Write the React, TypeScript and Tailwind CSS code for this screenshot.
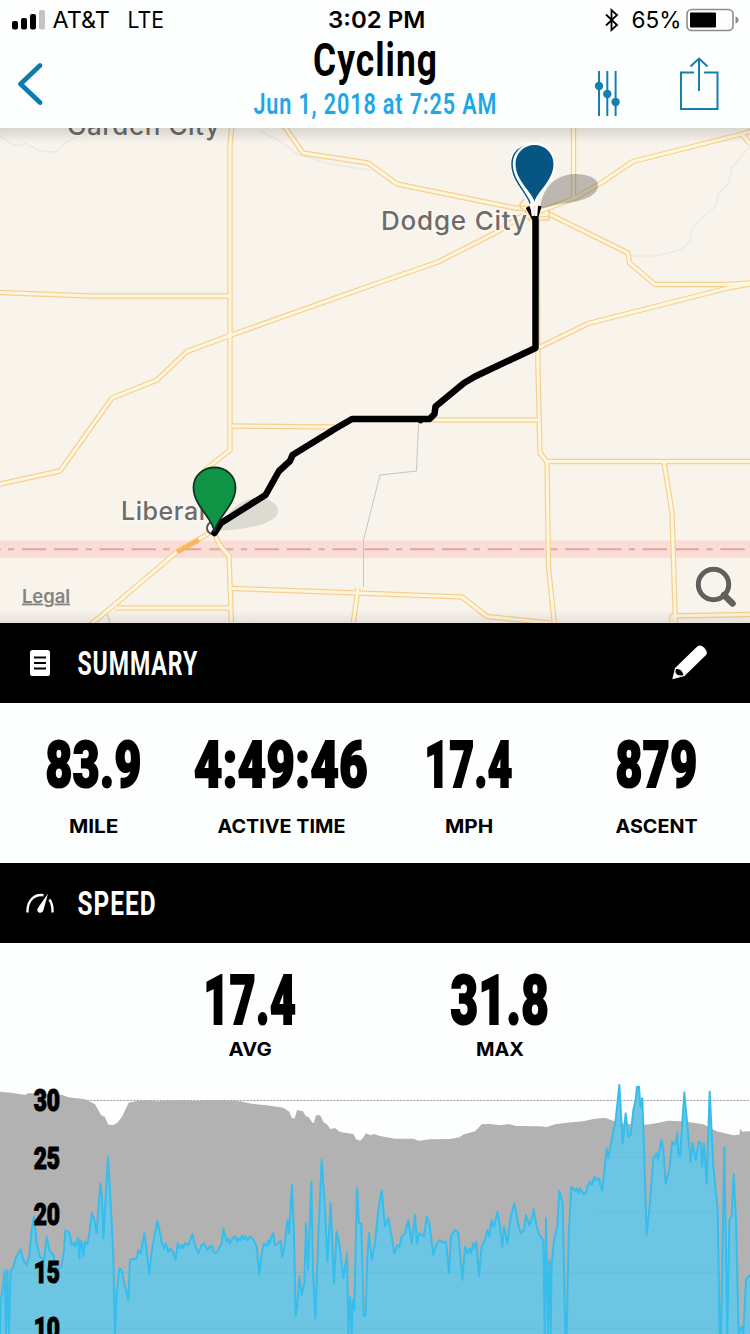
import { useLayoutEffect, useRef, useState } from "react";

const roads = [
  "M0 292.5 L90 296 L230 296",
  "M232 426 L335 427",
  "M430 420 L540 420",
  "M547 461.5 L750 461.5",
  "M664 462 L672 513 L675.5 625",
  "M672 625 L672 616 L750 614.5",
  "M232 588.5 L357 593 L462 597 L487 616.5 L550 623",
  "M358 588 L353 625",
  "M115 608 L230 608",
  "M213 530 L219 544 L229 556 L231.5 625",
  "M213 531 L178 551 L113 606 L90 625",
  "M232.5 120 L230 145 L230 450 L205 470",
  "M0 484 L60 471 L112 398 L157 380 L187 351.5 L230 335.5 L375 284 L438 262 L497 232 L520 217 L549 214",
  "M280 120 L303 153 L368 163 L397 184 L515 208 L545 209",
  "M573.5 120 L573.5 198",
  "M540 211 L573 199 L601 183 L633 161.5 L742 134 L755 130",
  "M742 134 L750 144",
  "M545 212 L628 253 L629.5 263 L655 284.5 L728 284.5 L755 282.5",
  "M536 349 L588 323.5 L728 288 L755 283",
  "M537 215 L538 370 L540 453 L547 462 L548.5 567 L554.5 625",
];

const speedLine =
  "0,792 2,690 8,660 14,600 18,792 22,600 27,792 32,600 40,592 48,562 55,550 62,538 70,570 80,585 88,560 95,480 102,440 110,520 120,560 132,570 140,500 150,545 160,555 170,600 185,590 192,540 196,480 208,488 215,525 221,518 226,530 231,510 235,505 238,565 242,512 246,520 250,560 255,515 262,522 268,490 276,428 283,450 290,490 301,340 306,380 310,505 324,262 332,400 340,560 345,792 350,670 358,595 366,602 372,640 378,660 385,690 390,570 410,565 415,540 422,550 433,490 440,540 448,615 455,545 463,500 472,453 480,490 487,525 492,535 497,520 505,545 512,535 518,545 527,568 533,520 539,535 545,525 549,535 555,520 565,525 571,510 577,492 585,525 595,550 605,525 612,520 622,540 629,530 635,528 641,545 647,550 655,540 665,520 670,478 680,515 685,505 690,520 698,505 705,498 711,515 715,505 721,512 725,497 731,508 736,498 742,510 750,500 760,508 770,530 778,615 785,550 792,520 800,528 805,510 809,522 815,498 820,490 824,525 832,522 842,512 847,560 855,520 862,450 867,490 876,345 882,500 887,738 892,700 898,620 905,675 913,640 918,460 924,600 934,335 939,600 946,745 955,500 965,270 975,420 982,575 992,400 1002,640 1010,485 1018,520 1030,625 1041,550 1045,792 1050,680 1055,792 1058,690 1063,720 1071,355 1077,460 1084,460 1091,738 1097,735 1102,560 1107,490 1115,570 1125,520 1135,420 1145,362 1155,470 1165,445 1175,500 1183,550 1192,525 1198,530 1205,500 1215,490 1225,450 1235,520 1245,435 1251,520 1258,490 1272,500 1280,440 1288,460 1300,555 1310,520 1320,510 1328,518 1338,515 1347,610 1353,500 1360,485 1367,480 1375,490 1387,630 1395,530 1402,552 1408,535 1413,550 1420,520 1424,535 1429,515 1437,618 1445,530 1455,510 1462,480 1468,500 1475,450 1482,470 1492,425 1500,470 1507,530 1512,470 1522,520 1532,440 1543,400 1552,450 1562,490 1572,480 1578,435 1588,465 1595,450 1601,418 1610,470 1618,495 1630,510 1634,792 1638,445 1644,792 1648,570 1652,792 1655,580 1662,510 1672,470 1678,362 1688,400 1696,792 1700,792 1706,500 1714,350 1725,362 1731,355 1735,370 1740,355 1750,372 1758,368 1762,350 1770,335 1776,345 1783,320 1790,330 1797,325 1802,345 1807,362 1820,235 1825,265 1835,210 1847,150 1858,45 1868,220 1877,130 1885,200 1892,195 1900,120 1907,90 1911,50 1917,50 1921,110 1927,85 1934,300 1940,495 1948,420 1960,265 1970,250 1974,270 1984,210 1990,240 1997,340 2008,300 2017,215 2025,225 2032,190 2035,250 2040,260 2053,67 2065,200 2072,275 2078,220 2087,270 2096,215 2103,220 2106,290 2112,220 2120,340 2129,65 2140,290 2153,420 2159,792 2163,792 2173,232 2182,792 2188,450 2195,440 2201,312 2208,450 2216,792 2225,770 2230,792 2238,630 2250,615";

const elevation =
  "0,65 40,69 75,75 85,70 110,70 185,74 205,82 255,88 285,103 303,135 314,140 325,164 340,165 352,158 365,142 386,98 412,93 440,91 470,94 500,92 540,91 590,93 640,90 720,94 755,101 800,106 850,113 868,125 876,145 884,145 891,120 909,124 917,138 926,142 938,158 942,158 947,138 956,134 962,138 970,155 982,165 992,177 1005,174 1020,186 1060,192 1068,208 1080,212 1088,205 1098,190 1112,196 1122,192 1140,198 1160,202 1185,206 1240,206 1255,212 1290,208 1350,207 1378,202 1392,193 1425,184 1437,172 1445,163 1470,162 1500,166 1525,162 1550,168 1620,169 1640,171 1665,163 1700,158 1750,154 1780,147 1815,143 1860,160 1930,165 1960,161 2005,152 2050,154 2110,163 2150,184 2200,196 2218,194 2221,176 2227,185 2250,184";

const axis = [
  { value: 30, y: 123 },
  { value: 25, y: 297 },
  { value: 20, y: 465 },
  { value: 15, y: 639 },
  { value: 10, y: 807 },
];

// Squeezes a line of text to the given width, for a condensed look
const Fit = ({
  text,
  width,
  className = "",
}: {
  text: string;
  width: number;
  className?: string;
}) => {
  const ref = useRef<HTMLSpanElement>(null);
  const [scale, setScale] = useState(1);
  useLayoutEffect(() => {
    if (ref.current) setScale(width / ref.current.offsetWidth);
  }, [width, text]);
  return (
    <span className="flex justify-center" style={{ width }}>
      <span
        ref={ref}
        className={`shrink-0 whitespace-nowrap ${className}`}
        style={{ transform: `scaleX(${scale})` }}>
        {text}
      </span>
    </span>
  );
};

const StatusBar = () => (
  <div className="flex justify-between h-10 pl-3 pr-[10px] text-[23px] leading-[41px] font-['Inter',sans-serif]">
    <div className="flex items-center w-[230px]">
      <svg width="34" height="20" className="mr-[7px]">
        <rect x="0" y="11" width="6" height="8.5" rx="2" />
        <rect x="9" y="8" width="6" height="11.5" rx="2" />
        <rect x="18" y="4" width="6" height="15.5" rx="2" />
        <rect x="27" y="0" width="6" height="19.5" rx="2" fill="#c4c4c4" />
      </svg>
      <Fit text="AT&T" width={57} />
      <span className="w-[18px]" />
      <Fit text="LTE" width={36} />
    </div>
    <span className="ml-[2px]">
      <Fit text="3:02 PM" width={97} className="font-semibold" />
    </span>
    <div className="flex items-center justify-end w-[230px]">
      <svg width="16" height="24" viewBox="0 0 16 24" fill="none" stroke="#000" strokeWidth="1.8" className="mr-[11px]">
        <path d="M2 6.5 L13 17 L7.5 22 V2 L13 7 L2 17.5" />
      </svg>
      <Fit text="65%" width={50} />
      <svg width="54" height="24" viewBox="0 0 54 24" className="ml-[5px]">
        <rect x="1" y="1.5" width="46" height="21" rx="4.5" fill="none" stroke="#8c8c8c" strokeWidth="1.6" />
        <rect x="4" y="4.500" width="26" height="15" rx="1" />
        <path d="M49.5 8.5 Q52.5 9.5 52.5 12 Q52.5 14.5 49.5 15.500 Z" fill="#8c8c8c" />
      </svg>
    </div>
  </div>
);

const Header = () => (
  <header className="h-32 bg-[#fdfefe]">
    <StatusBar />
    <div className="flex justify-between h-[88px] pl-4 pr-[30px]">
      <svg width="150" height="88" viewBox="16 40 150 88" fill="none" stroke="#0b7bb0" strokeWidth="4.8" strokeLinecap="round" strokeLinejoin="round">
        <path d="M40 65.5 L20.5 84 L40 102.5" />
      </svg>
      <div className="flex flex-col items-center ml-[14px] font-['Roboto',sans-serif]">
        <Fit text="Cycling" width={125} className="text-[46px] font-bold tracking-[0.03em] leading-[40px]" />
        <Fit text="Jun 1, 2018 at 7:25 AM" width={244} className="text-[30px] font-semibold tracking-[0.04em] leading-[40px] mt-[4px] text-[#1ea7e6]" />
      </div>
      <svg width="150" height="88" viewBox="570 40 150 88" fill="none" stroke="#157fae" strokeWidth="2">
        <path d="M599 71 V116 M607.3 71 V116 M615.6 71 V116" />
        <g fill="#157fae" stroke="none">
          <circle cx="599" cy="86" r="4.2" />
          <circle cx="607.3" cy="94" r="4.2" />
          <circle cx="615.6" cy="102" r="4.2" />
        </g>
        <path d="M694 72.5 H681 V109 H717.5 V72.5 H704 M699 91 V59 M690.5 66.5 L699 58.5 L707.5 66.5" />
      </svg>
    </div>
  </header>
);

const RouteMap = () => (
  <svg width="750" height="495" viewBox="0 128 750 495" className="block bg-[#f8f4ec]">
    <defs>
      <linearGradient id="top" x1="0" y1="0" x2="0" y2="1">
        <stop offset="0" stopColor="#000" stopOpacity=".13" />
        <stop offset="1" stopColor="#000" stopOpacity="0" />
      </linearGradient>
      <linearGradient id="bottom" x1="0" y1="0" x2="0" y2="1">
        <stop offset="0" stopColor="#000" stopOpacity="0" />
        <stop offset="1" stopColor="#000" stopOpacity=".08" />
      </linearGradient>
    </defs>

    {/* rivers */}
    <g fill="none" stroke="#ece9e3" strokeWidth="1.5">
      <path d="M0 136 L10 143 L20 146 L25 143 L40 151 L55 152 L65 143 L80 135" />
      <path d="M260 131 L280 141 L297 154 L330 164 L370 170" />
      <path d="M630 256 L655 256 L680 250 L690 241 L692 229 L706 214 L716 206 L718 194 L728 184 L732 168 L741 157 L750 146" />
    </g>

    {/* state line */}
    <rect x="0" y="540.5" width="750" height="17.5" fill="#fbddd5" />
    <path d="M-55.6 549.2 H750" stroke="#d6aaa4" strokeWidth="2" strokeDasharray="24.3 7.7 24.3 7.3 6.3 7.7" />

    <path d="M418.5 424 L416.5 471 L380 475 L363.5 540 L363.5 587 M107 613 L110 623" fill="none" stroke="#c6c4bf" />

    <g fill="none" stroke="#f5d092" strokeWidth="5.4" strokeLinejoin="round">
      {roads.map((d) => (
        <path key={d} d={d} />
      ))}
    </g>
    <g fill="none" stroke="#fff6dd" strokeWidth="3" strokeLinejoin="round">
      {roads.map((d) => (
        <path key={d} d={d} />
      ))}
    </g>
    <path d="M199 540 L177 552" stroke="#fbb65b" strokeWidth="4.5" />
    <path d="M528 220 H549 V210 M519 206 L524 199 M519 206 L528 214" fill="none" stroke="#f4cf8f" strokeWidth="1.5" />

    <circle cx="213" cy="528" r="6" fill="#fff" stroke="#555" strokeWidth="2" />

    <g fill="#6e6c6b" stroke="#fbf8f2" strokeWidth="3" paintOrder="stroke" className="font-['Inter',sans-serif] font-medium">
      <text x="67" y="134.5" fontSize="26" textLength="153">Garden City</text>
      <text x="381" y="229.5" fontSize="26" textLength="146">Dodge City</text>
      <text x="121" y="520" fontSize="25" textLength="84">Liberal</text>
    </g>

    {/* pin shadows */}
    <path d="M540 209 C542 188 555 175 574 174 C590 174 599 179 598 187 C596 198 577 202 560 204 Z" fill="#5a5852" fillOpacity=".38" />
    <path d="M218 531 C228 511 240 499 256 498 C270 498 279 504 278 512 C276 522 258 526 240 529 Z" fill="#5a5852" fillOpacity=".17" />

    <path
      d="M535.5 220 V348 L510 360 L475 376.5 L464 383 L435.5 406.5 L434.5 414 L429.5 419 H352 L333 430 L330 432 L292.5 455 L290 461 L279 471 L265.5 495 L240 511 L221 523 L214.5 533"
      fill="none"
      stroke="#000"
      strokeWidth="6.5"
      strokeLinecap="round"
      strokeLinejoin="round"
    />
    <path d="M527.5 207 L534 219 M539.5 206 L536 219" stroke="#000" strokeWidth="4" />
    <circle cx="420.5" cy="421" r="2.5" />

    <path d="M214.5 532 C213 518 193.5 506 193.5 487.5 C193.5 476 203 467.5 214.5 467.5 C226 467.5 235.5 476 235.5 487.5 C235.5 506 216 518 214.5 532 Z" fill="#0f9446" stroke="#12351f" strokeWidth="1.8" />

    <g strokeLinejoin="round">
      <path d="M532 205 C530 194 512.5 182 512.5 164 C512.5 153 521 145 532 145 C543 145 551.5 153 551.5 164 C551.5 182 534 194 532 205 Z" fill="#075582" stroke="#fff" strokeWidth="5" />
      <path d="M531 206 C529 194 512 182 512 164 C512 153 520 145 532 145" fill="none" stroke="#075582" strokeWidth="1.5" />
      <path d="M534.5 202 C532.5 192 515.5 181 515.5 164 C515.5 153 524 145 534.5 145 C545 145 553.5 153 553.5 164 C553.5 181 536.5 192 534.5 202 Z" fill="#075582" stroke="#fff" strokeWidth="4.5" paintOrder="stroke" />
      <path d="M531 203 L533 216 M537 203 L536 216" stroke="#fff" strokeWidth="2.5" />
    </g>

    <text x="22" y="602.5" fontSize="18.5" textLength="48" fill="#858381" className="font-['Inter',sans-serif] font-semibold underline decoration-2">Legal</text>

    <circle cx="713.5" cy="584.5" r="15.2" fill="none" stroke="#fff" strokeOpacity=".6" strokeWidth="7" />
    <path d="M724 595 L732.5 603.5" stroke="#62605d" strokeWidth="6.5" strokeLinecap="round" />
    <circle cx="713.5" cy="584.5" r="15.2" fill="none" stroke="#62605d" strokeWidth="5" />

    <rect x="0" y="128" width="750" height="15" fill="url(#top)" />
    <rect x="0" y="610" width="750" height="13" fill="url(#bottom)" />
  </svg>
);

const NotesIcon = () => (
  <svg width="28" height="28" viewBox="26 648 28 28">
    <rect x="30" y="649" width="20" height="26" rx="2.5" fill="#fff" />
    <path d="M34 656.5 H46 M34 662 H46 M34 667.5 H46" stroke="#000" strokeWidth="2.2" />
  </svg>
);

const GaugeIcon = () => (
  <svg width="28" height="22" viewBox="0 0 28 22">
    <path d="M1.5 20.5 C1 9 8 1.8 17.5 3.2 M23.5 7.5 C25.8 11 26.8 15 26.5 20.5" fill="none" stroke="#fff" strokeWidth="2.4" />
    <path d="M22 1.5 L17.6 17.5 C16.8 20.8 14.5 21.3 12.5 20.2 C10.8 19 11 17 12.6 15 Z" fill="#fff" />
  </svg>
);

const PencilIcon = () => (
  <svg width="36" height="36" viewBox="672 645 36 36">
    <path d="M672.3 679.3 L675 668 L697.5 646.3 Q700.3 644 704 647.5 Q708.5 652 706 655 L684.5 676 Z" fill="#fff" />
    <path d="M676 669 Q681.5 668 683.5 675 Q677.5 677 675.3 672 Z" fill="#000" />
  </svg>
);

const Stat = ({
  value,
  label,
  valueWidth,
  labelWidth,
  big,
}: {
  value: string;
  label: string;
  valueWidth: number;
  labelWidth: number;
  big?: boolean;
}) => (
  <div className="flex flex-col items-center">
    <Fit
      text={value}
      width={valueWidth}
      className={`font-['Roboto',sans-serif] font-black leading-[68px] tracking-[0.01em] [-webkit-text-stroke:2.2px_#000] ${big ? "text-[69px]" : "text-[65px]"}`}
    />
    <Fit
      text={label}
      width={labelWidth}
      className={`font-['Inter',sans-serif] font-bold text-[19px] leading-6 ${big ? "mt-[3px]" : "mt-4"}`}
    />
  </div>
);

const SpeedChart = () => (
  <svg width="750" height="264" viewBox="0 0 2250 792" className="block">
    <path d="M0 91.5 H2250" stroke="#a5a5a5" strokeWidth="3" strokeDasharray="7 3" />
    <polygon points={`0,792 ${elevation} 2250,792`} fill="#b2b2b2" />
    <polygon points={`0,792 ${speedLine} 2250,792`} fill="#6cc6e3" />
    <path d="M1830 262 H2060 M1790 427 H2150 M0 607 H2160 M0 775 H2250" stroke="#63c0de" strokeWidth="3" fill="none" />
    <polyline points={speedLine} fill="none" stroke="#37bdec" strokeWidth="6" strokeLinejoin="round" />
    <g className="font-['Roboto',sans-serif] font-black" fontSize="92" stroke="#000" strokeWidth="3.5">
      {axis.map(({ value, y }) => (
        <text key={value} x="101" y={y} textLength="79" lengthAdjust="spacingAndGlyphs">
          {value}
        </text>
      ))}
    </g>
  </svg>
);

const App = () => {
  return (
    <main className="w-[750px] h-[1334px] overflow-hidden text-black bg-[#fdfefe]">
      <Header />
      <RouteMap />

      <h2 className="flex items-center h-20 pl-[26px] pr-[42px] text-white bg-black">
        <NotesIcon />
        <span className="ml-[23px]">
          <Fit text="SUMMARY" width={121} className="font-['Roboto',sans-serif] font-bold text-[34px] tracking-[0.04em]" />
        </span>
        <span className="ml-auto">
          <PencilIcon />
        </span>
      </h2>
      <div className="grid grid-cols-4 h-40 pt-[28px]">
        <Stat value="83.9" label="MILE" valueWidth={96} labelWidth={49} />
        <Stat value="4:49:46" label="ACTIVE TIME" valueWidth={174} labelWidth={128} />
        <Stat value="17.4" label="MPH" valueWidth={88} labelWidth={48} />
        <Stat value="879" label="ASCENT" valueWidth={82} labelWidth={82} />
      </div>

      <h2 className="flex items-center h-20 pl-[26px] text-white bg-black">
        <GaugeIcon />
        <span className="ml-[23px]">
          <Fit text="SPEED" width={79} className="font-['Roboto',sans-serif] font-bold text-[34px] tracking-[0.04em]" />
        </span>
      </h2>
      <div className="grid grid-cols-2 h-[127px] px-[125px] pt-[24px]">
        <Stat value="17.4" label="AVG" valueWidth={93} labelWidth={43} big />
        <Stat value="31.8" label="MAX" valueWidth={99} labelWidth={48} big />
      </div>
      <SpeedChart />
    </main>
  );
};

export default App;
